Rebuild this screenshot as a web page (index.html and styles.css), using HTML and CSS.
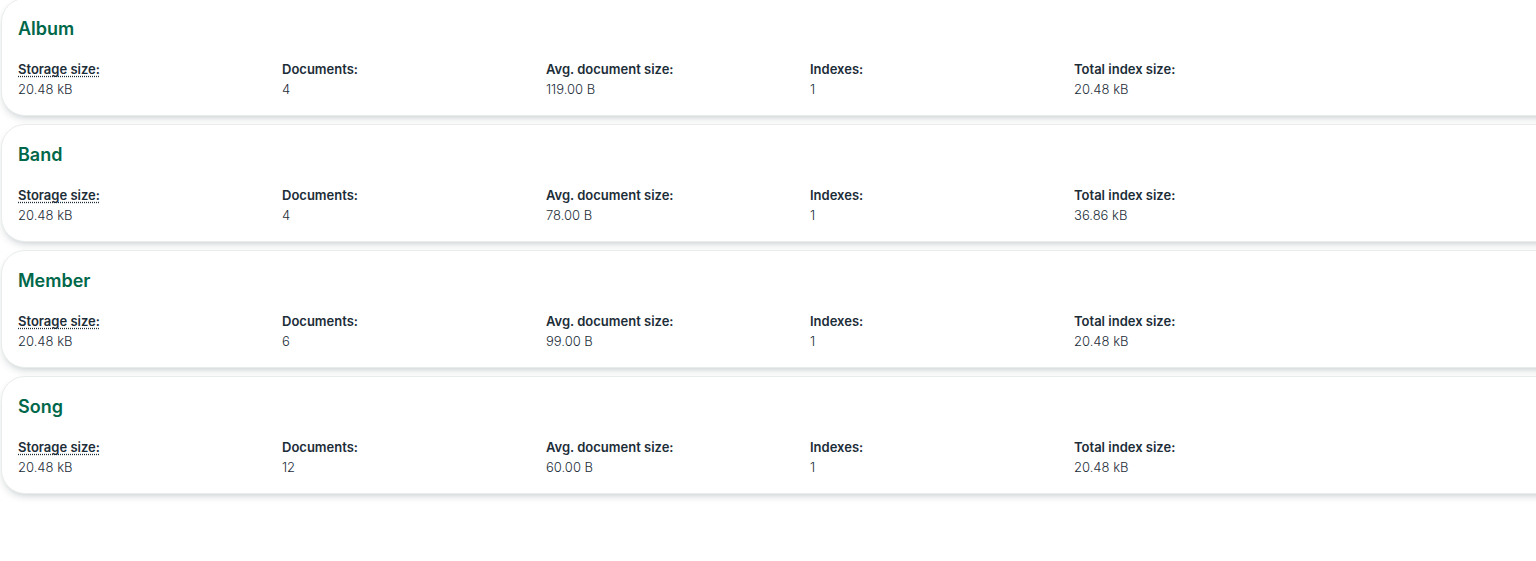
FILE: index.html
```
<!DOCTYPE html>
<html lang="en">
<head>
<meta charset="utf-8">
<meta name="viewport" content="width=device-width, initial-scale=1">
<title>Collections</title>
<link rel="stylesheet" href="styles.css">
</head>
<body>
<main class="viewport">
  <ul class="collections">
    <li class="card">
      <h2 class="card-title">Album</h2>
      <dl class="stats">
        <div class="stat"><dt class="label"><span class="hint">Storage size:</span></dt><dd class="value">20.48 kB</dd></div>
        <div class="stat"><dt class="label">Documents:</dt><dd class="value">4</dd></div>
        <div class="stat"><dt class="label">Avg. document size:</dt><dd class="value">119.00 B</dd></div>
        <div class="stat"><dt class="label">Indexes:</dt><dd class="value">1</dd></div>
        <div class="stat"><dt class="label">Total index size:</dt><dd class="value">20.48 kB</dd></div>
      </dl>
    </li>
    <li class="card">
      <h2 class="card-title">Band</h2>
      <dl class="stats">
        <div class="stat"><dt class="label"><span class="hint">Storage size:</span></dt><dd class="value">20.48 kB</dd></div>
        <div class="stat"><dt class="label">Documents:</dt><dd class="value">4</dd></div>
        <div class="stat"><dt class="label">Avg. document size:</dt><dd class="value">78.00 B</dd></div>
        <div class="stat"><dt class="label">Indexes:</dt><dd class="value">1</dd></div>
        <div class="stat"><dt class="label">Total index size:</dt><dd class="value">36.86 kB</dd></div>
      </dl>
    </li>
    <li class="card">
      <h2 class="card-title">Member</h2>
      <dl class="stats">
        <div class="stat"><dt class="label"><span class="hint">Storage size:</span></dt><dd class="value">20.48 kB</dd></div>
        <div class="stat"><dt class="label">Documents:</dt><dd class="value">6</dd></div>
        <div class="stat"><dt class="label">Avg. document size:</dt><dd class="value">99.00 B</dd></div>
        <div class="stat"><dt class="label">Indexes:</dt><dd class="value">1</dd></div>
        <div class="stat"><dt class="label">Total index size:</dt><dd class="value">20.48 kB</dd></div>
      </dl>
    </li>
    <li class="card">
      <h2 class="card-title">Song</h2>
      <dl class="stats">
        <div class="stat"><dt class="label"><span class="hint">Storage size:</span></dt><dd class="value">20.48 kB</dd></div>
        <div class="stat"><dt class="label">Documents:</dt><dd class="value">12</dd></div>
        <div class="stat"><dt class="label">Avg. document size:</dt><dd class="value">60.00 B</dd></div>
        <div class="stat"><dt class="label">Indexes:</dt><dd class="value">1</dd></div>
        <div class="stat"><dt class="label">Total index size:</dt><dd class="value">20.48 kB</dd></div>
      </dl>
    </li>
  </ul>
</main>
</body>
</html>
```

FILE: styles.css
```
* {
  box-sizing: border-box;
}

body {
  margin: 0;
  background: #fff;
  color: #1c2d38;
  font-family: Inter, "Liberation Sans", sans-serif;
  font-size: 13px;
  line-height: 20px;
}

.viewport {
  min-height: 100vh;
  overflow: hidden;
}

/* The cards run past the top and right edges of the scroll area. */
.collections {
  display: flex;
  flex-direction: column;
  gap: 8px;
  margin: -2px -32px 0 1px;
  padding: 0;
  list-style: none;
}

.card {
  padding: 16px;
  border: 1px solid #e8edeb;
  border-radius: 24px;
  background: #fff;
  box-shadow: 0 4px 10px -4px rgba(0, 30, 43, 0.3);
}

.card-title {
  margin: 0 0 16px;
  color: #00684a;
  font-size: 18px;
  font-weight: 600;
  line-height: 28px;
}

.stats {
  display: flex;
  gap: 16px;
  margin: 0;
}

.stat {
  flex: 0 1 248px;
}

.label {
  font-weight: 600;
}

.value {
  margin: 0;
  font-weight: 300;
}

.hint {
  text-decoration: underline dotted;
  text-decoration-skip-ink: none;
  text-underline-offset: 2px;
}
```
